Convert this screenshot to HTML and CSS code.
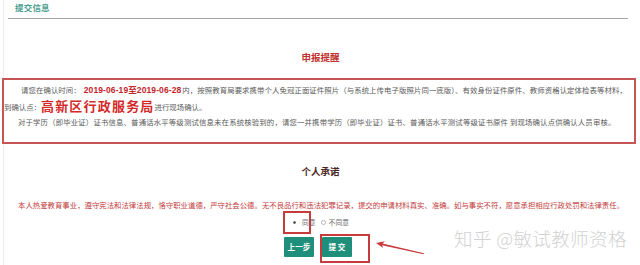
FILE: index.html
```html
<!DOCTYPE html>
<html lang="zh-CN">
<head>
<meta charset="utf-8">
<title>提交信息</title>
<link rel="stylesheet" href="styles.css">
</head>
<body>
<div class="page">
  <div class="tab"><span class="tab-label">提交信息</span></div>
  <h2 class="title title-red">申报提醒</h2>
  <div class="notice">
    <p class="line line-1">请您在确认时间：<b class="date">2019-06-19至2019-06-28</b>内，按照教育局要求携带个人免冠正面证件照片（与系统上传电子版照片同一底版）、有效身份证件原件、教师资格认定体检表等材料，</p>
    <p class="line line-2">到确认点：<b class="place">高新区行政服务局</b>进行现场确认。</p>
    <p class="line line-3">对于学历（即毕业证）证书信息、普通话水平等级测试信息未在系统核验到的，请您一并携带学历（即毕业证）证书、普通话水平测试等级证书原件 到现场确认点供确认人员审核。</p>
  </div>
  <h2 class="title title-dark">个人承诺</h2>
  <p class="promise">本人热爱教育事业，遵守宪法和法律法规，恪守职业道德，严守社会公德。无不良品行和违法犯罪记录，提交的申请材料真实、准确。如与事实不符，愿意承担相应行政处罚和法律责任。</p>
  <div class="agree">
    <label class="opt"><span class="radio radio-on"></span>同意</label>
    <label class="opt"><span class="radio"></span>不同意</label>
  </div>
  <div class="btns">
    <button class="btn">上一步</button>
    <button class="btn">提 交</button>
  </div>

  <div class="mark mark-agree"></div>
  <div class="mark mark-submit"></div>
  <svg class="arrow" width="60" height="20" viewBox="0 0 60 20">
    <path d="M4 5 L13 3.2 L10.5 5.6 L52 15.2 L51.6 16.2 L10 7.2 L11.2 10 Z" fill="#c83a3a"/>
  </svg>
  <div class="watermark">知乎 @敏试教师资格</div>
</div>
</body>
</html>
```

FILE: styles.css
```css
* { box-sizing: border-box; }
html, body { margin: 0; padding: 0; background: #ffffff; }
body {
  width: 640px;
  height: 265px;
  overflow: hidden;
  font-family: "Noto Sans CJK SC", "Liberation Sans", sans-serif;
  color: #555555;
}
.page {
  position: relative;
  height: 265px;
  border-left: 1px solid #ececec;
  margin-left: 3px;
  width: 634px;
}
.tab {
  height: 19px;
  margin: 0 9px 0 4px;
  padding: 0 0 0 7px;
  border-bottom: 1px solid #a5a5a5;
}
.tab-label {
  display: block;
  font-size: 8.5px;
  line-height: 14px;
  color: #4a9e90;
  font-weight: bold;
  letter-spacing: 0.2px;
}
.title {
  margin: 0;
  text-align: center;
  font-size: 9.5px;
  line-height: 14px;
  font-weight: bold;
}
.title-red { color: #c0302e; margin-top: 31px; margin-bottom: 14px; }
.title-dark { color: #4a2424; margin-top: 20px; }
.notice {
  margin: 0 1px 0 -2px;
  border: 2px solid #c65656;
  padding: 2px 0 15px 0;
  height: 66px;
}
.line {
  margin: 0;
  font-size: 7.4px;
  line-height: 15px;
  white-space: nowrap;
  color: #5a5a5a;
}
.line-1 { padding-left: 17px; letter-spacing: 0.08px; }
.line-2 { padding-left: 0; }
.line-3 { padding-left: 14px; letter-spacing: 0.15px; }
.date {
  color: #c4242a;
  font-size: 8.5px;
  font-family: "Liberation Sans", "Noto Sans CJK SC", sans-serif;
  letter-spacing: 0.1px;
  padding: 0 1px 0 3px;
}
.place {
  color: #d42a2a;
  font-size: 13px;
  letter-spacing: 1.2px;
  vertical-align: -1px;
}
.promise {
  margin: 21px 0 0 14px;
  font-size: 7.4px;
  line-height: 12px;
  color: #c23a3a;
  white-space: nowrap;
}
.agree {
  display: flex;
  gap: 5px;
  margin-top: 6px;
  padding-left: 288px;
  height: 10px;
  align-items: center;
}
.opt {
  display: flex;
  align-items: center;
  gap: 3px;
  font-size: 6.8px;
  line-height: 10px;
  color: #6a6a6a;
}
.radio {
  width: 5px;
  height: 5px;
  border-radius: 50%;
  border: 0.5px solid #b8b8b8;
  background: #ffffff;
  display: inline-block;
}
.radio-on {
  background: #555555;
  border-color: #555555;
  width: 3px;
  height: 3px;
  margin: 0 3px 0 1px;
}
.btns {
  display: flex;
  gap: 8px;
  margin-top: 10px;
  padding-left: 280px;
}
.btn {
  width: 30px;
  height: 20px;
  padding: 0;
  border: none;
  border-radius: 1px;
  background: #1f8f7c;
  color: #ffffff;
  font-family: "Noto Sans CJK SC", "Liberation Sans", sans-serif;
  font-size: 7.6px;
  font-weight: bold;
  line-height: 20px;
}
.mark {
  position: absolute;
  border: 2px solid #c63c3c;
}
.mark-agree { left: 279px; top: 211px; width: 28px; height: 23px; }
.mark-submit { left: 316px; top: 234px; width: 50px; height: 29px; }
.arrow {
  position: absolute;
  left: 368px;
  top: 238px;
}
.watermark {
  position: absolute;
  left: 450px;
  top: 226px;
  font-size: 18.6px;
  line-height: 24px;
  color: #d2d2d2;
  font-weight: 300;
  white-space: nowrap;
  letter-spacing: 0.3px;
}
```
